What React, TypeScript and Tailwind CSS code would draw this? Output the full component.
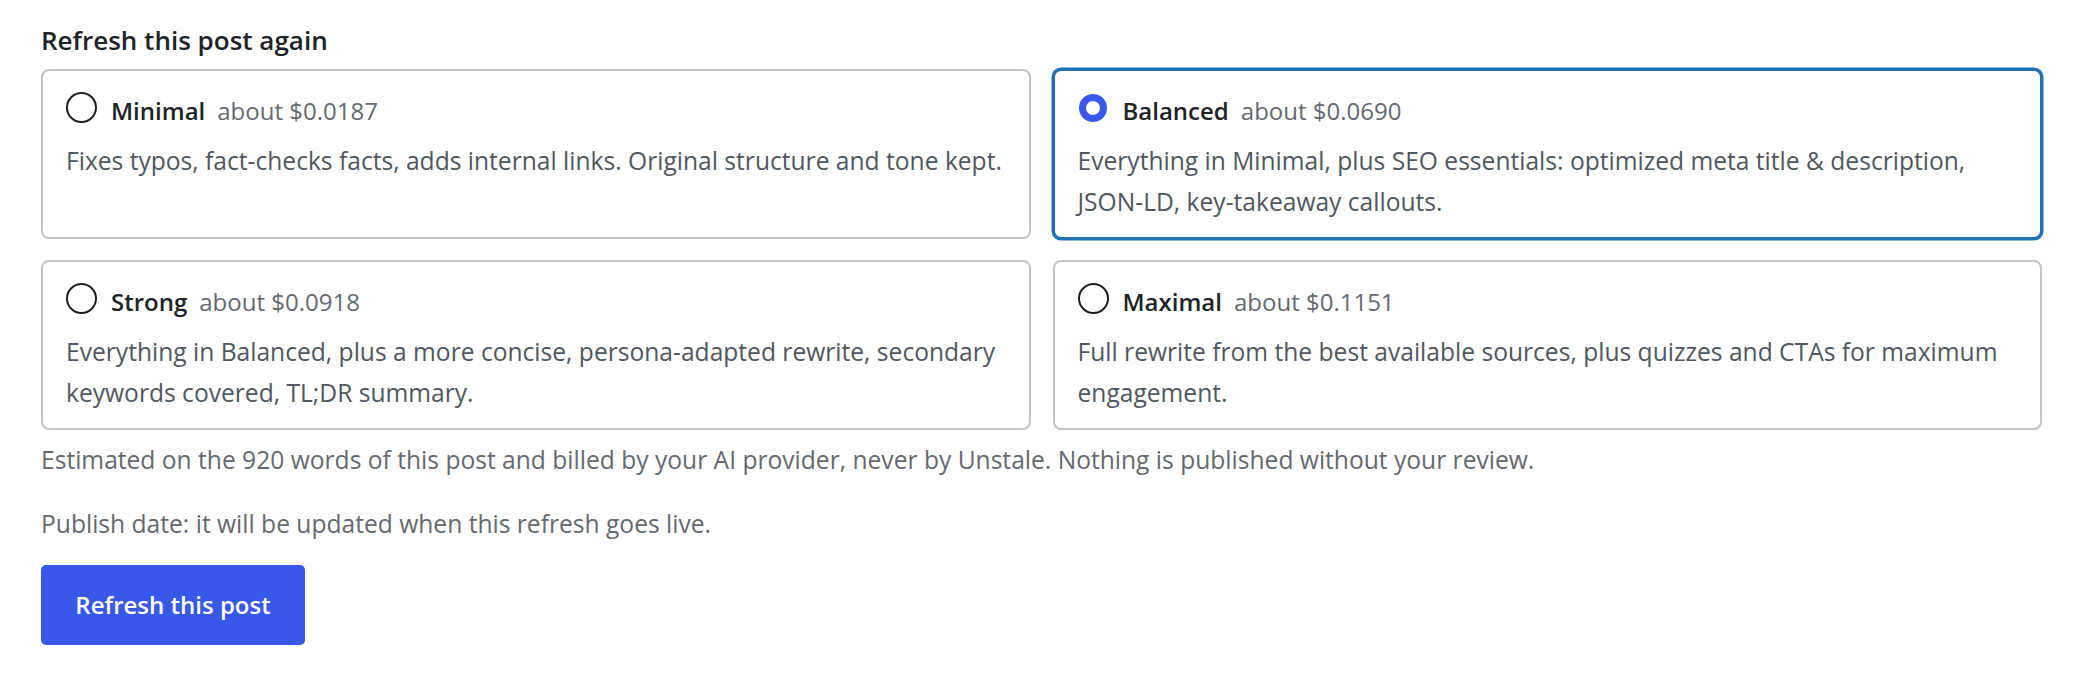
import React, { useState } from "react";

type Level = {
	id: string;
	name: string;
	price: string;
	description: string;
};

const levels: Level[] = [
	{
		id: "minimal",
		name: "Minimal",
		price: "about $0.0187",
		description:
			"Fixes typos, fact-checks facts, adds internal links. Original structure and tone kept.",
	},
	{
		id: "balanced",
		name: "Balanced",
		price: "about $0.0690",
		description:
			"Everything in Minimal, plus SEO essentials: optimized meta title & description, JSON-LD, key-takeaway callouts.",
	},
	{
		id: "strong",
		name: "Strong",
		price: "about $0.0918",
		description:
			"Everything in Balanced, plus a more concise, persona-adapted rewrite, secondary keywords covered, TL;DR summary.",
	},
	{
		id: "maximal",
		name: "Maximal",
		price: "about $0.1151",
		description:
			"Full rewrite from the best available sources, plus quizzes and CTAs for maximum engagement.",
	},
];

const Radio: React.FC<{ checked: boolean }> = ({ checked }) =>
	checked ? (
		<span className="mt-[3px] ml-[1px] mr-[2px] h-[28px] w-[28px] shrink-0 rounded-full border-[7px] border-[#3858e9] bg-white" />
	) : (
		<span className="mt-[1px] h-[31px] w-[31px] shrink-0 rounded-full border-2 border-[#1e1e1e] bg-white" />
	);

export default function App() {
	const [selected, setSelected] = useState("balanced");

	return (
		<div
			className="min-h-screen bg-white pt-[22px] pl-[41px] pr-[38px] text-[#1d2327]"
			style={{ fontFamily: "'Open Sans', 'Noto Sans', sans-serif" }}
		>
			<h2 className="mb-[11px] text-[26px] font-semibold leading-[36px]">
				Refresh this post again
			</h2>

			{/* Level cards */}
			<div className="grid grid-cols-2 gap-x-[22px] gap-y-[21px]">
				{levels.map(level => {
					const isSelected = selected === level.id;
					return (
						<label
							key={level.id}
							onClick={() => setSelected(level.id)}
							className={
								isSelected
									? "block cursor-pointer rounded-[8px] border-2 border-[#2271b1] bg-white px-[23px] pt-[20px] pb-[15px] shadow-[0_0_0_1.5px_#2271b1]"
									: "block cursor-pointer rounded-[8px] border-2 border-[#c3c4c7] bg-white px-[23px] pt-[20px] pb-[15px]"
							}
						>
							<div className="flex items-start gap-[14px]">
								<Radio checked={isSelected} />
								<div className="text-[24px] leading-[40px]">
									<span className="font-semibold text-[#1d2327]">
										{level.name}
									</span>
									<span className="ml-[12px] text-[#646970]">{level.price}</span>
								</div>
							</div>
							<p className="mt-[9px] text-[24.6px] leading-[41px] text-[#50575e]">
								{level.description}
							</p>
						</label>
					);
				})}
			</div>

			<p className="mt-[10px] text-[24.6px] leading-[40px] text-[#646970]">
				Estimated on the 920 words of this post and billed by your AI provider,
				never by Unstale. Nothing is published without your review.
			</p>
			<p className="mt-[24px] text-[24.6px] leading-[40px] text-[#646970]">
				Publish date: it will be updated when this refresh goes live.
			</p>

			<button className="mt-[21px] h-[80px] w-[264px] rounded-[5px] bg-[#3858e9] text-[24px] font-semibold text-white">
				Refresh this post
			</button>
		</div>
	);
}
